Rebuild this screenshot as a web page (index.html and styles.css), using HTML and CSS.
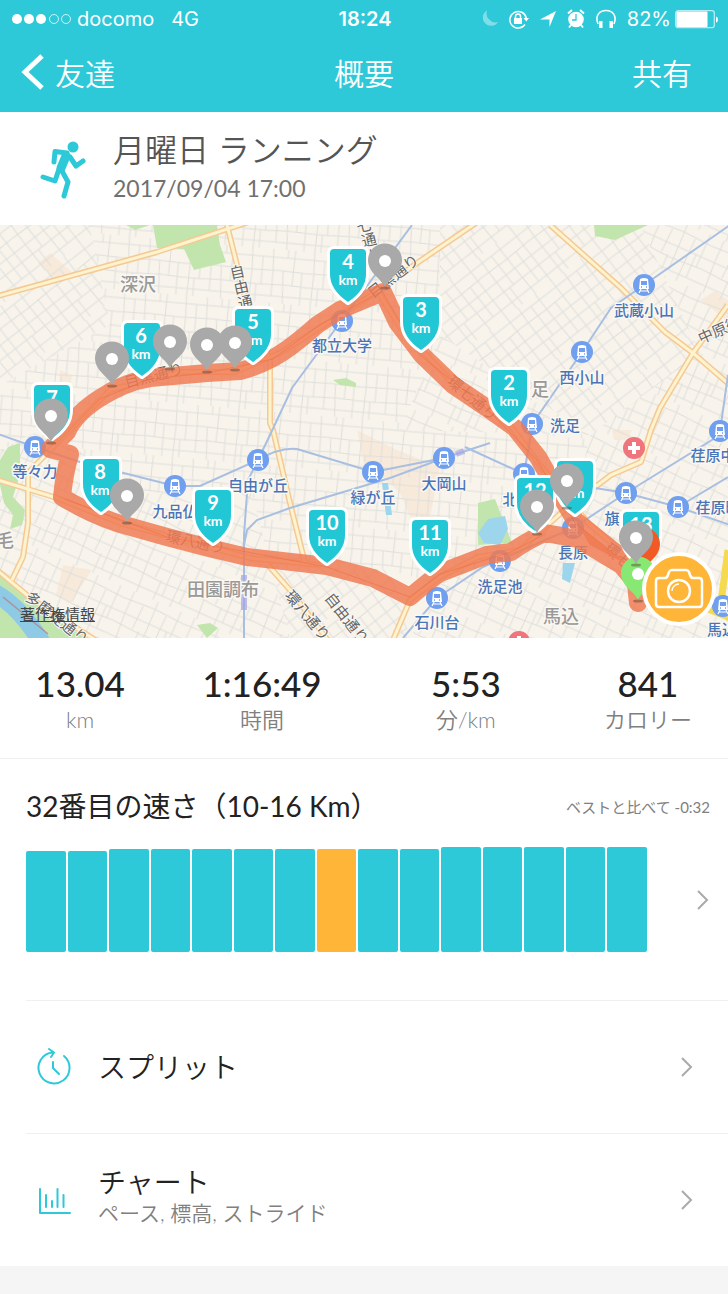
FILE: index.html
```
<!DOCTYPE html>
<html lang="ja">
<head>
  <meta charset="UTF-8">
  <meta name="viewport" content="width=device-width, initial-scale=1.0">
  <title>概要</title>
  <link rel="stylesheet" href="styles.css">
</head>
<body>
  <header class="header">
    <div class="status-bar">
      <div class="status-left">
        <svg class="signal" width="60" height="12" viewBox="0 0 60 12">
          <g fill="#fff"><circle cx="5" cy="6" r="5"/><circle cx="17" cy="6" r="5"/><circle cx="29" cy="6" r="5"/></g>
          <g fill="none" stroke="#fff" stroke-opacity=".75"><circle cx="42" cy="6" r="4.5"/><circle cx="54" cy="6" r="4.5"/></g>
        </svg>
        <span>docomo</span>
        <span class="network">4G</span>
      </div>
      <time class="clock">18:24</time>
      <div class="status-right">
        <svg width="18" height="20" viewBox="0 0 18 20"><path d="M6 1.500A8.200 8.200 0 1 0 17 13A9 9 0 0 1 6 1.500Z" fill="#fff" opacity=".4"/></svg>
        <svg width="20" height="20" viewBox="0 0 20 20">
          <path d="M16 15.500A8.300 8.300 0 1 1 17.300 9" fill="none" stroke="#fff" stroke-width="1.500"/>
          <path d="M14.500 9H20l-2.700 3.500zM5 9h8v6H5z" fill="#fff"/>
          <path d="M6.500 9V7.500a2.500 2.500 0 0 1 5 0V9" fill="none" stroke="#fff" stroke-width="1.500"/>
        </svg>
        <svg width="18" height="20" viewBox="0 0 18 20"><path d="M17 2L10.500 18V10.500H1Z" fill="#fff"/></svg>
        <svg width="18" height="20" viewBox="0 0 18 20">
          <circle cx="9" cy="10.500" r="7.800" fill="#fff"/>
          <path d="M1 4.500l4-3.500M17 4.500l-4-3.500M4 16l-2 2.500M14 16l2 2.500" stroke="#fff" stroke-width="2"/>
          <path d="M9 5v6H5" fill="none" stroke="#2dc9d9" stroke-width="1.300"/>
        </svg>
        <svg width="22" height="20" viewBox="0 0 22 20">
          <path d="M3 15C-.5 6 5 1.500 11 1.500S22.500 6 19 15" fill="none" stroke="#fff" stroke-width="1.600"/>
          <path d="M4 12h3.500v7H4zM14.500 12H18v7h-3.500z" fill="#fff"/>
        </svg>
        <span>82%</span>
        <svg class="battery" width="43" height="20" viewBox="0 0 43 20">
          <rect x=".7" y="1.700" width="38.600" height="17" rx="2.500" fill="none" stroke="#fff" stroke-opacity=".65" stroke-width="1.300"/>
          <rect x="1.500" y="2.500" width="31" height="15.500" rx="1" fill="#fff"/>
          <path d="M41 7.500q2 .5 2 3t-2 3z" fill="#fff"/>
        </svg>
      </div>
    </div>
    <nav class="nav">
      <button class="nav-button nav-back" type="button">
        <svg width="24" height="38" viewBox="0 0 24 38"><path d="M22 3L5 19L22 35" fill="none" stroke="#fff" stroke-width="5"/></svg>
        友達
      </button>
      <h1 class="nav-title">概要</h1>
      <button class="nav-button nav-share" type="button">共有</button>
    </nav>
  </header>

  <main>
    <section class="activity">
      <svg class="runner" width="48" height="60" viewBox="0 0 48 60">
        <circle cx="33" cy="8" r="5.500" fill="#2dc9d9"/>
        <g fill="none" stroke="#2dc9d9" stroke-linecap="round" stroke-linejoin="round">
          <path d="M26 17L21 29" stroke-width="9"/>
          <path d="M27 14L15 12.500L14 23" stroke-width="5"/>
          <path d="M30 18L36 27L43 22" stroke-width="5"/>
          <path d="M19 30L15 42L3 38M22 32L28 43L24 57" stroke-width="5"/>
        </g>
      </svg>
      <div>
        <h2 class="activity-title">月曜日 ランニング</h2>
        <time class="activity-date">2017/09/04 17:00</time>
      </div>
    </section>

    <section class="map">
      <svg class="map-canvas" viewBox="0 0 728 413">
        <defs>
          <pattern id="streets" width="62" height="54" patternUnits="userSpaceOnUse" patternTransform="rotate(5)">
            <path d="M0 8L62 8M0 22L34 21L62 22M0 36H18L40 35L62 36M0 47H62M6 0L7 22L6 54M17 8V36M27 0L28 21V47M38 21L40 54M49 0L48 36M57 22V54M12 36V54M42 0V8"/>
          </pattern>
          <pattern id="streets-diagonal" width="58" height="64" patternUnits="userSpaceOnUse" patternTransform="rotate(-38)">
            <path d="M0 7H58M0 18L28 19L58 18M0 31H58M0 43H32L58 43M0 56H58M9 0L8 18V64M20 7V43M31 0V31L32 64M42 18V56M52 0V64M15 43V64"/>
          </pattern>
          <pattern id="streets-slope" width="66" height="56" patternUnits="userSpaceOnUse" patternTransform="rotate(24)">
            <path d="M0 10L33 8L66 10M0 24H66M0 35L30 37L66 35M0 49H66M8 0V24L10 56M22 10L21 35M34 0L35 49M47 10L46 56M59 0V35M28 35V56M54 24V49"/>
          </pattern>
          <path id="roads" d="M-2 71L157 27L255-5M227 0L247 80L270 135V198L273 205L290 278L305 338M476-2L417 38L383 63L340 90L280 128L235 147H180L110 165L55 220L28 248V298L23 332L12 355M550 0L621 63L665 107L693 128L730 160M728 80L693 128L660 183L651 205L641 237L611 250L561 288L520 325L478 332L440 352L410 375L393 415M-2 255L57 273L120 298L250 333L320 340M-2 346L33 375L100 418M268 340L290 365L330 418M380 70L400 102L450 155L510 200L540 240L590 300L650 350L728 390"/>
          <g id="station">
            <circle r="11" fill="#6f9fee"/>
            <path d="M-4-6Q0-8 4-6L5 4H-5Z" fill="#fff"/>
            <path d="M-3-4H3V0H-3Z" fill="#6f9fee"/>
            <path d="M-3 2h1M2 2h1" stroke="#6f9fee" stroke-width="1.500"/>
            <path d="M-3 4L-5 8M3 4L5 8M-4 6H4" stroke="#fff" stroke-width="1.200"/>
          </g>
          <g id="hospital">
            <circle r="11" fill="#f0747d"/>
            <path d="M0-6V6M-6 0H6" stroke="#fff" stroke-width="4"/>
          </g>
          <path id="shield" d="M-14-1H14Q18-1 18 3V24Q18 40 0 52Q-18 40-18 24V3Q-18-1-14-1Z"/>
          <g id="pin">
            <ellipse cy="27" rx="5" ry="1.500" fill="#5e4c40" opacity=".5"/>
            <path d="M0 26C-4 17-17 12-17-1A17 16.500 0 0 1 17-1C17 12 4 17 0 26Z"/>
            <circle r="6" fill="#fff"/>
          </g>
        </defs>

        <!-- 土地・緑地・水面 -->
        <rect width="728" height="413" fill="#f8f4ec"/>
        <g fill="#f8eadb">
          <path d="M38 38L50 28L72 47L54 54ZM357 205L397 225L440 242L430 292H410L400 268L363 235ZM700 75L715 66L728 75V96ZM63 340L92 345L70 378L56 370ZM60 145L72 150L70 163L60 160ZM612 205H632L628 215H614Z"/>
        </g>
        <g>
          <path fill="url(#streets-diagonal)" d="M0 0H90L110 100L0 160ZM440 0H640L700 128L590 210L440 110ZM270 340L390 345L410 413H290Z"/>
          <path fill="url(#streets)" d="M90 0H440V110L400 205L250 260L130 270L50 200L0 225V160L110 100ZM400 205L590 210L570 300L440 360L390 345L270 340L250 260Z"/>
          <path fill="url(#streets-slope)" d="M640 0H728V413H410L440 360L570 300L590 210L700 128ZM440 110L590 210L400 205ZM0 225L50 200L130 270L250 260L270 340L290 413H0Z"/>
        </g>
        <g fill="#c1e5ac">
          <path d="M153 0H217L220 20L226 37L194 45L184 24L157 23ZM126 0H150L135 5ZM594 0H648L615 15L595 11ZM8 222L20 218V250L13 272L25 285L22 300L10 304L13 290L4 278L0 260V235ZM0 348L35 378L85 413H0ZM478 278L495 274L512 318L478 320ZM197 400L210 398L218 403L207 413ZM333 155L346 153L356 158V162L340 160Z"/>
        </g>
        <path d="M-5 368Q20 382 42 418" fill="none" stroke="#8ec9e6" stroke-width="18"/>
        <path d="M3 372L48 409" stroke="#b87b78" stroke-width="1.500" opacity=".7"/>
        <path d="M488 294L505 291L508 304L500 320L484 318L478 308ZM563 338H575L570 358L562 354ZM382 258H388L392 290H386Z" fill="#9dd5ec"/>

        <!-- 道路 -->
        <use href="#roads" class="road-edge"/>
        <use href="#roads" class="road-fill"/>
        <path d="M728 325L722 370L730 395M706 383L728 392" fill="none" stroke="#f5d94f" stroke-width="7"/>

        <!-- 鉄道 -->
        <g fill="none" stroke="#a9bfe2" stroke-width="2">
          <path d="M730 0L644 60L611 83L582 127L533 198L524 249M412 0L342 95L292 163L270 210L258 235L248 255L244 310V415M-2 209L35 222L80 237L175 261H200L258 235Q280 222 297 224L373 247L444 233L490 218M243 325L247 305L257 295L290 283L390 253L444 233M465 222L524 249L595 263L626 268L678 282L730 300M403 413L437 373L483 342L573 303L626 268L728 205M678 282L728 252M728 150L720 206"/>
        </g>
        <path d="M244 350V385M456 229L464 226" stroke="#a6a6e4" stroke-width="6" opacity=".7"/>

        <use href="#station" x="342" y="96"/>
        <use href="#station" x="644" y="60"/>
        <use href="#station" x="582" y="127"/>
        <use href="#station" x="532" y="199"/>
        <use href="#station" x="720" y="206"/>
        <use href="#station" x="35" y="222"/>
        <use href="#station" x="175" y="261"/>
        <use href="#station" x="258" y="235"/>
        <use href="#station" x="373" y="247"/>
        <use href="#station" x="444" y="233"/>
        <use href="#station" x="437" y="373"/>
        <use href="#station" x="500" y="336"/>
        <use href="#station" x="573" y="303"/>
        <use href="#station" x="524" y="249"/>
        <use href="#station" x="626" y="268"/>
        <use href="#station" x="678" y="282"/>
        <use href="#station" x="723" y="381"/>
        <use href="#hospital" x="634" y="223"/>
        <use href="#hospital" x="519" y="417"/>

        <!-- 地名 -->
        <g class="label area">
          <text x="138" y="66">深沢</text>
          <text x="540" y="171">足</text>
          <text x="223" y="371">田園調布</text>
          <text x="561" y="398">馬込</text>
          <text x="5" y="322">毛</text>
        </g>
        <g class="label station-name">
          <text x="342" y="126">都立大学</text>
          <text x="644" y="91">武蔵小山</text>
          <text x="582" y="158">西小山</text>
          <text x="565" y="206">洗足</text>
          <text x="35" y="252">等々力</text>
          <text x="175" y="292">九品仏</text>
          <text x="258" y="266">自由が丘</text>
          <text x="373" y="278">緑が丘</text>
          <text x="444" y="264">大岡山</text>
          <text x="437" y="403">石川台</text>
          <text x="500" y="367">洗足池</text>
          <text x="573" y="333">長原</text>
          <text x="510" y="280">北</text>
          <text x="612" y="299">旗</text>
          <text x="713" y="236">荏原中</text>
          <text x="718" y="288">荏原町</text>
          <text x="722" y="410">馬込</text>
        </g>
        <g class="label road-name">
          <text x="231 235 239" y="54 69 84" rotate="-12">自由通</text>
          <text x="358 363 369" y="8 22 37" rotate="-14">七通り</text>
          <text transform="translate(373 74) rotate(-38)">目黒通り</text>
          <text transform="translate(126 163) rotate(-14)">目黒通り</text>
          <text transform="translate(446 158) rotate(40)">環七通り</text>
          <text transform="translate(165 316) rotate(12)">環八通り</text>
          <text transform="translate(603 325) rotate(40)">環七</text>
          <text transform="translate(701 119) rotate(-24)">中原街道</text>
          <text transform="translate(284 371) rotate(50)">環八通り</text>
          <text transform="translate(324 373) rotate(52)">自由通り</text>
          <text transform="translate(24 374) rotate(38)">多摩堤通り</text>
        </g>

        <!-- 走行ルート -->
        <path class="route" d="M638 378L635 350L621 332L575 295L551 255L538 232L515 203L487 183L453 160L422 130L397 97L383 67L340 85L317 100Q290 124 273 133T240 146L207 148L150 153Q125 157 100 173T67 207L50 224L70 229Q64 250 62 272Q90 289 117 298L167 312Q207 323 247 332L327 341L373 353L410 372Q430 355 440 348L487 330L511 327Q530 314 545 308L578 314L621 340L638 360"/>
        <path d="M578 300L628 340L590 320Z" fill="#f07a52" opacity=".85"/>
        <path d="M383 68L420 130L487 184L537 235L575 298L635 345M380 67L318 101L273 134L207 148L150 154L100 174L55 220M65 274L167 312L327 342L410 372L440 349L511 327L545 309" fill="none" stroke="#e56536" stroke-width="1" opacity=".4"/>

        <!-- 距離マーカー -->
        <g class="shields">
          <use href="#shield" x="575" y="237"/>
          <use href="#shield" x="535" y="254"/>
          <use href="#shield" x="509" y="146"/>
          <use href="#shield" x="421" y="73"/>
          <use href="#shield" x="348" y="25"/>
          <use href="#shield" x="253" y="85"/>
          <use href="#shield" x="142" y="99"/>
          <use href="#shield" x="52" y="161"/>
          <use href="#shield" x="101" y="235"/>
          <use href="#shield" x="213" y="266"/>
          <use href="#shield" x="327" y="286"/>
          <use href="#shield" x="430" y="296"/>
          <use href="#shield" x="641" y="288"/>
        </g>
        <g class="shield-text">
          <text x="575" y="257">1<tspan x="575" dy="16" class="unit">km</tspan></text>
          <text x="509" y="165">2<tspan x="509" dy="16" class="unit">km</tspan></text>
          <text x="421" y="92">3<tspan x="421" dy="16" class="unit">km</tspan></text>
          <text x="348" y="44">4<tspan x="348" dy="16" class="unit">km</tspan></text>
          <text x="253" y="104">5<tspan x="253" dy="16" class="unit">km</tspan></text>
          <text x="141" y="118">6<tspan x="141" dy="16" class="unit">km</tspan></text>
          <text x="52" y="180">7</text>
          <text x="100" y="254">8<tspan x="100" dy="16" class="unit">km</tspan></text>
          <text x="213" y="285">9<tspan x="213" dy="16" class="unit">km</tspan></text>
          <text x="327" y="305">10<tspan x="327" dy="16" class="unit">km</tspan></text>
          <text x="430" y="315">11<tspan x="430" dy="16" class="unit">km</tspan></text>
          <text x="535" y="273">12</text>
          <text x="641" y="307">13</text>
        </g>

        <!-- ピン -->
        <g fill="#a9a9a9">
          <use href="#pin" x="112" y="134"/>
          <use href="#pin" x="170" y="117"/>
          <use href="#pin" x="207" y="120"/>
          <use href="#pin" x="235" y="118"/>
          <use href="#pin" x="51" y="191"/>
          <use href="#pin" x="385" y="36"/>
          <use href="#pin" x="127" y="271"/>
          <use href="#pin" x="567" y="256"/>
          <use href="#pin" x="537" y="282"/>
          <use href="#pin" x="643" y="320" fill="#f15a24"/>
          <use href="#pin" x="638" y="349" fill="#87e873"/>
          <use href="#pin" x="636" y="313"/>
        </g>
      </svg>
      <a class="map-legal" href="#legal">著作権情報</a>
      <button class="camera" type="button" aria-label="写真を追加">
        <svg width="50" height="42" viewBox="0 0 50 42" fill="none" stroke="#fff" stroke-width="2.500" stroke-linejoin="round">
          <path d="M5 10H11Q13 10 14 7L15 4Q16 2 18 2H32Q34 2 35 4L36 7Q37 10 39 10H45Q48 10 48 13V36Q48 39 45 39H5Q2 39 2 36V13Q2 10 5 10Z"/>
          <circle cx="25" cy="23" r="11"/>
          <path d="M18 23A7 7 0 0 1 25 16" stroke-width="1.500"/>
        </svg>
      </button>
    </section>

    <dl class="stats">
      <div class="stat"><dd>13.04</dd><dt>km</dt></div>
      <div class="stat"><dd>1:16:49</dd><dt>時間</dt></div>
      <div class="stat"><dd>5:53</dd><dt>分/km</dt></div>
      <div class="stat"><dd>841</dd><dt>カロリー</dt></div>
    </dl>

    <section class="ranking">
      <div class="ranking-head">
        <h2>32番目の速さ（10-16 Km）</h2>
        <span class="compare">ベストと比べて -0:32</span>
      </div>
      <a class="ranking-body" href="#ranking" aria-label="速さのランキング">
        <span class="bars">
          <span class="bar" style="height: 101px"></span>
          <span class="bar" style="height: 101px"></span>
          <span class="bar" style="height: 103px"></span>
          <span class="bar" style="height: 103px"></span>
          <span class="bar" style="height: 103px"></span>
          <span class="bar" style="height: 103px"></span>
          <span class="bar" style="height: 103px"></span>
          <span class="bar current" style="height: 103px"></span>
          <span class="bar" style="height: 103px"></span>
          <span class="bar" style="height: 103px"></span>
          <span class="bar" style="height: 105px"></span>
          <span class="bar" style="height: 105px"></span>
          <span class="bar" style="height: 105px"></span>
          <span class="bar" style="height: 105px"></span>
          <span class="bar" style="height: 105px"></span>
        </span>
        <svg class="chevron" width="14" height="22" viewBox="0 0 14 22"><path d="M2 2L11 11L2 20"/></svg>
      </a>
    </section>

    <a class="row" href="#splits">
      <svg class="row-icon" width="36" height="40" viewBox="0 0 36 40">
        <path d="M29 9A15.500 15.500 0 1 1 17 5.500M14 2L19 5.500L16 10M18 15V21L24 27"/>
      </svg>
      <span class="row-title">スプリット</span>
      <svg class="chevron" width="14" height="22" viewBox="0 0 14 22"><path d="M2 2L11 11L2 20"/></svg>
    </a>
    <a class="row" href="#charts">
      <svg class="row-icon" width="36" height="40" viewBox="0 0 36 40">
        <path d="M5 9V33H35M11 15V27M17 21V27M22.500 9V27M28.500 15V27"/>
      </svg>
      <span class="row-text">
        <span class="row-title">チャート</span>
        <span class="row-sub">ペース, 標高, ストライド</span>
      </span>
      <svg class="chevron" width="14" height="22" viewBox="0 0 14 22"><path d="M2 2L11 11L2 20"/></svg>
    </a>
  </main>
</body>
</html>
```

FILE: styles.css
```
:root {
  --teal: #2dc9d9;
  --orange: #ffb538;
  --text: #222;
  --gray: #808080;
  --line: #f0f0f0;
}

* {
  box-sizing: border-box;
}

body {
  margin: 0;
  background: #f5f5f5;
  color: var(--text);
  font-family: Lato, "Noto Sans CJK JP", sans-serif;
}

h1, h2, dl, dd {
  margin: 0;
  font-weight: normal;
}

a {
  color: inherit;
  text-decoration: none;
}

button {
  border: 0;
  padding: 0;
  background: none;
  color: inherit;
  font: inherit;
  cursor: pointer;
}

svg {
  display: block;
  flex: none;
}

main {
  background: #fff;
}

/* ヘッダー */
.header {
  background: var(--teal);
  color: #fff;
}

.status-bar,
.nav {
  display: grid;
  grid-template-columns: 1fr auto 1fr;
  align-items: center;
}

.status-bar {
  height: 37px;
  padding: 0 10px 0 12px;
  font: 20px/24px Inter, sans-serif;
}

.status-left,
.status-right {
  display: flex;
  align-items: center;
  gap: 5px;
}

.status-right {
  justify-content: flex-end;
  gap: 10px;
}

.network {
  margin-left: 12px;
}

.clock {
  font-weight: 600;
}

.battery {
  margin-left: -6px;
}

.nav {
  height: 75px;
  padding: 0 36px 6px 20px;
  font-size: 30px;
  font-weight: 350;
}

.nav-button {
  display: flex;
  align-items: center;
  gap: 11px;
}

.nav-back {
  justify-self: start;
}

.nav-title {
  padding-left: 16px;
  font-size: 30px;
  font-weight: 350;
}

.nav-share {
  justify-self: end;
}

/* アクティビティ */
.activity {
  display: flex;
  align-items: center;
  gap: 25px;
  height: 113px;
  padding: 0 40px;
}

.activity-title {
  color: #555;
  font-size: 32px;
  font-weight: 350;
  line-height: 38px;
}

.activity-date {
  display: block;
  color: #707070;
  font-size: 23px;
  line-height: 38px;
}

/* 地図 */
.map {
  position: relative;
  overflow: hidden;
}

.map-canvas {
  width: 100%;
  height: auto;
}

pattern path {
  fill: none;
  stroke: #dededa;
  stroke-width: 1;
}

.road-edge,
.road-fill {
  fill: none;
  stroke: #f5c995;
  stroke-width: 6;
  stroke-linejoin: round;
}

.road-fill {
  stroke: #fdf3cc;
  stroke-width: 3;
}

.label {
  font-family: "Noto Sans CJK JP", sans-serif;
  text-anchor: middle;
  stroke: #fbf8f2;
  stroke-width: 3;
  stroke-linejoin: round;
  paint-order: stroke;
}

.area {
  fill: #999;
  font-size: 18px;
  font-weight: 500;
}

.station-name {
  fill: #4a74b8;
  font-size: 15px;
  font-weight: 500;
}

.road-name {
  fill: #666;
  font-size: 15px;
  stroke-width: 2;
  text-anchor: start;
}

.route {
  fill: none;
  stroke: #f07a52;
  stroke-width: 18;
  stroke-linecap: round;
  stroke-linejoin: round;
  opacity: .84;
}

.shields {
  fill: #22c7d6;
  stroke: #fff;
  stroke-width: 6;
  stroke-linejoin: round;
  paint-order: stroke;
}

.shield-text {
  fill: #fff;
  font-size: 20px;
  font-weight: 700;
  text-anchor: middle;
}

.unit {
  font-size: 14px;
}

.map-legal {
  position: absolute;
  left: 20px;
  bottom: 12px;
  color: #444;
  font-size: 15px;
  line-height: 24px;
  text-decoration: underline;
}

.camera {
  position: absolute;
  right: 12px;
  bottom: 12px;
  display: flex;
  align-items: center;
  justify-content: center;
  width: 74px;
  height: 74px;
  border: 4px solid #fff;
  border-radius: 50%;
  background: var(--orange);
}

/* 記録 */
.stats {
  display: grid;
  grid-template-columns: 11fr 14fr 14fr 11fr;
  padding: 24px 0 22px;
  border-bottom: 1px solid var(--line);
  text-align: center;
}

.stat {
  display: flex;
  flex-direction: column;
}

.stat dd {
  font-size: 35px;
  font-weight: 500;
  line-height: 42px;
}

.stat dt {
  color: var(--gray);
  font-size: 22px;
  font-weight: 350;
  line-height: 32px;
}

/* ランキング */
.ranking {
  padding: 27px 18px 48px 26px;
}

.ranking-head {
  display: flex;
  align-items: center;
  justify-content: space-between;
}

.ranking-head h2 {
  font-size: 28px;
  line-height: 40px;
}

.compare {
  color: var(--gray);
  font-size: 15px;
}

.ranking-body {
  display: flex;
  align-items: center;
  gap: 49px;
  margin-top: 21px;
}

.bars {
  display: flex;
  flex: 1;
  align-items: flex-end;
  gap: 2px;
}

.bar {
  flex: 1;
  border-radius: 2px;
  background: var(--teal);
}

.bar.current {
  background: var(--orange);
}

.chevron {
  fill: none;
  stroke: #aaa;
  stroke-width: 2;
}

/* メニュー */
.row {
  display: flex;
  align-items: center;
  height: 133px;
  margin-left: 26px;
  padding: 0 34px 0 9px;
  border-top: 1px solid var(--line);
}

.row-icon {
  margin-right: 27px;
  fill: none;
  stroke: var(--teal);
  stroke-width: 2;
  stroke-linecap: round;
  stroke-linejoin: round;
}

.row-text {
  display: flex;
  flex-direction: column;
  padding-bottom: 8px;
}

.row-title {
  font-size: 28px;
  font-weight: 350;
  line-height: 34px;
}

.row-sub {
  color: var(--gray);
  font-size: 21px;
  font-weight: 350;
  line-height: 28px;
}

.row .chevron {
  margin-left: auto;
}
```
